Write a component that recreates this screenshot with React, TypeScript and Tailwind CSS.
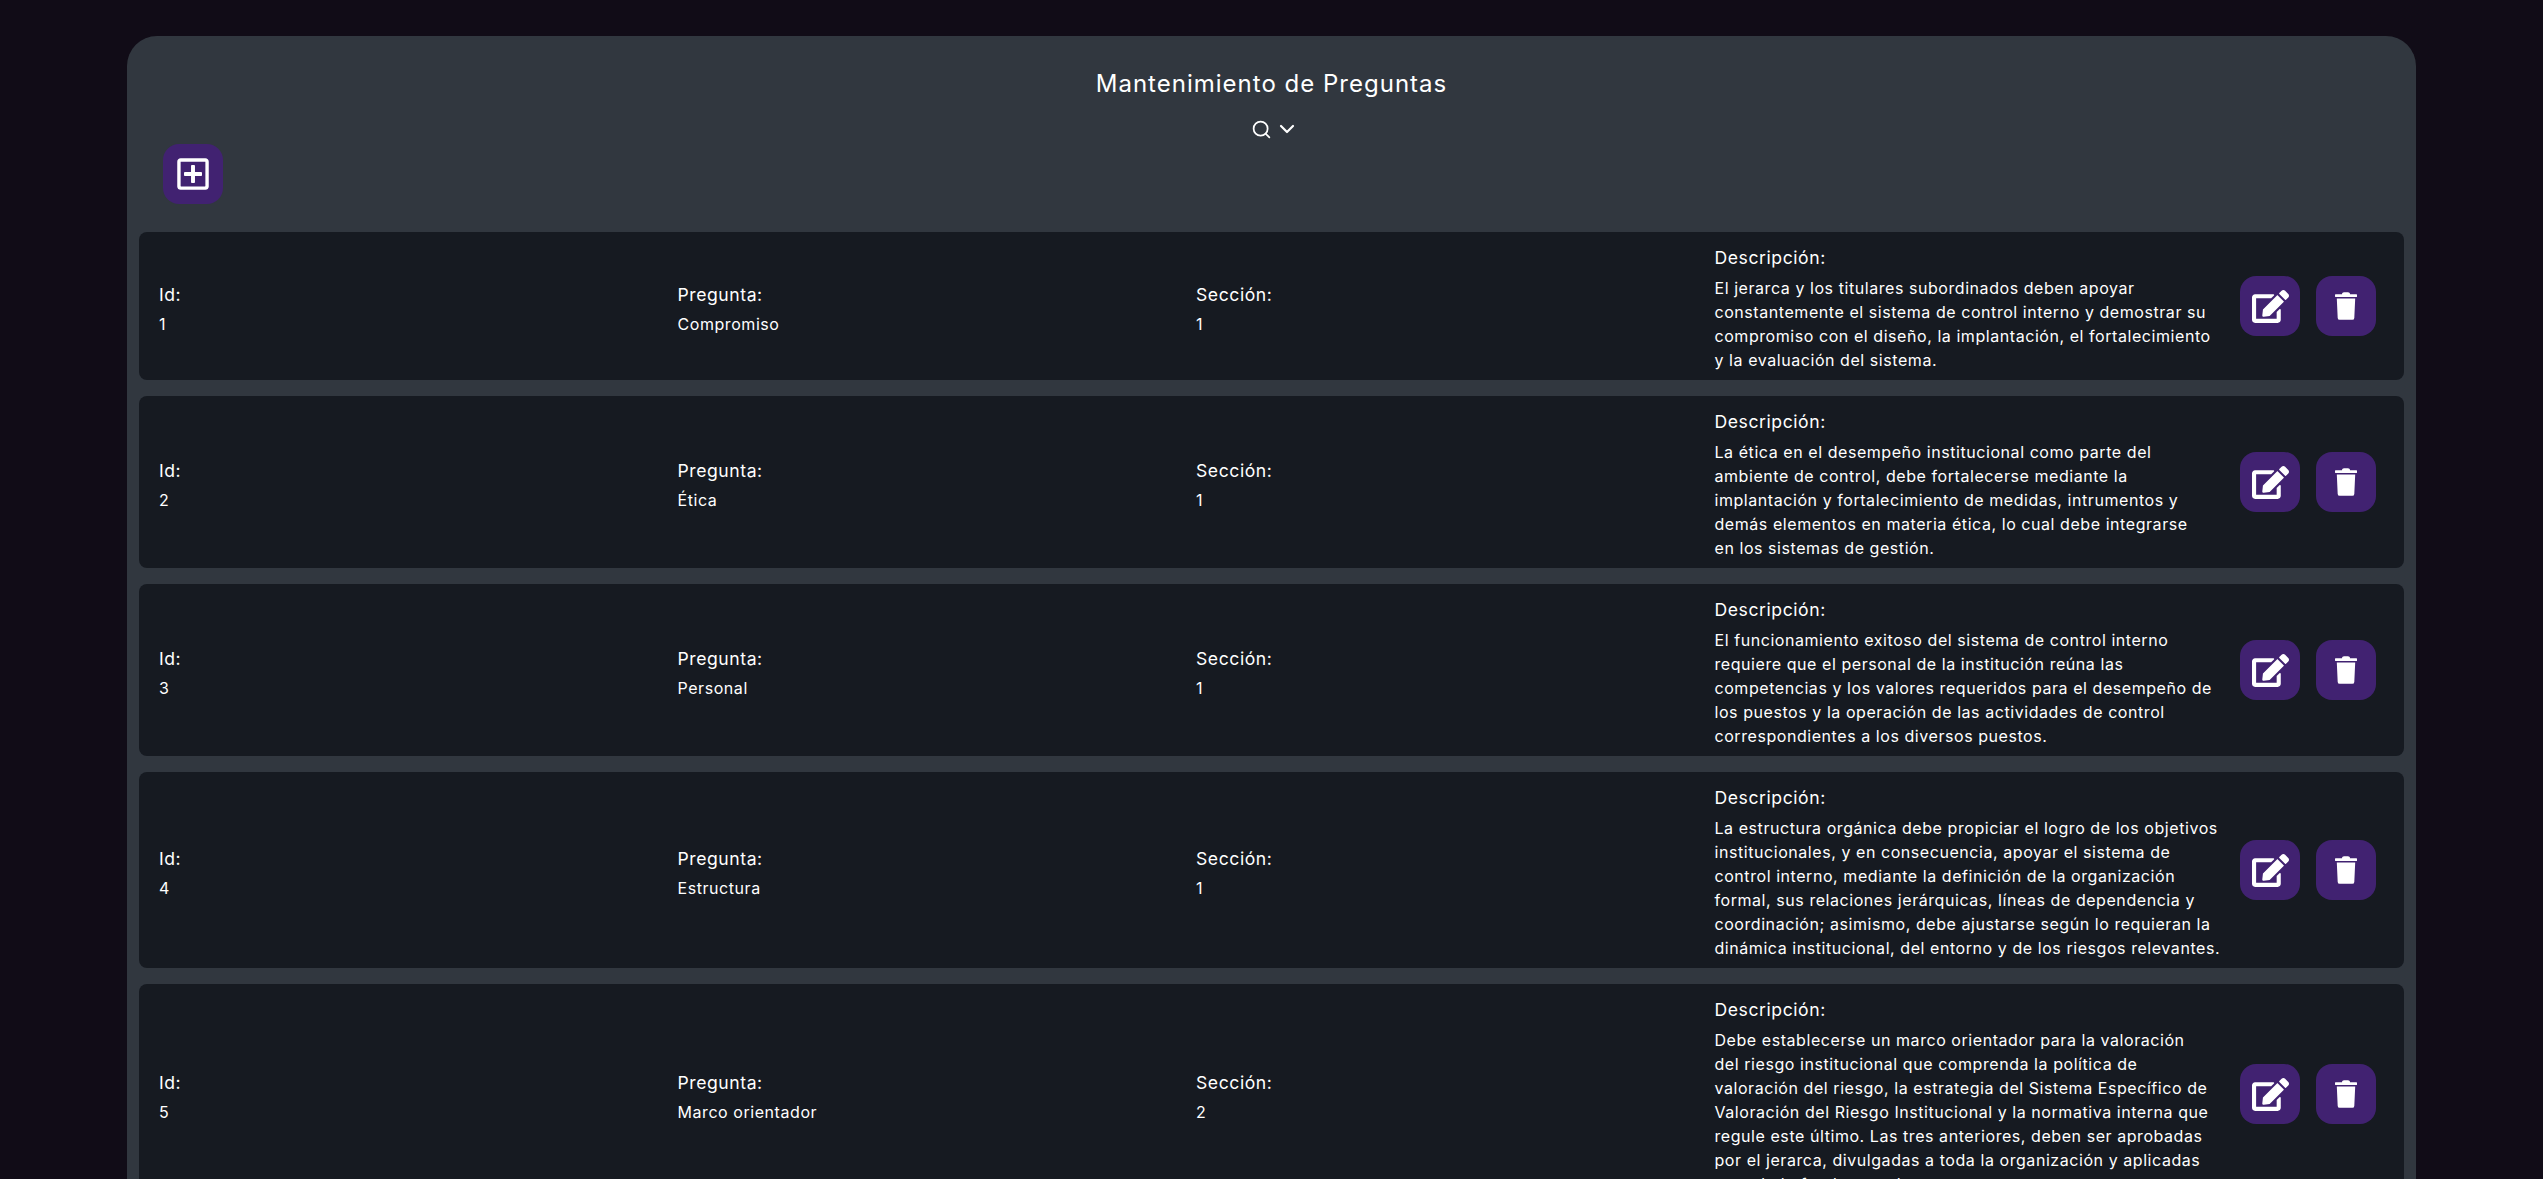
import { ChevronDown, Search } from "lucide-react";

type Q = { id: number; name: string; section: number; lines: string[] };

const rows: Q[] = [
  { id: 1, name: "Compromiso", section: 1, lines: ["El jerarca y los titulares subordinados deben apoyar", "constantemente el sistema de control interno y demostrar su", "compromiso con el diseño, la implantación, el fortalecimiento", "y la evaluación del sistema."] },
  { id: 2, name: "Ética", section: 1, lines: ["La ética en el desempeño institucional como parte del", "ambiente de control, debe fortalecerse mediante la", "implantación y fortalecimiento de medidas, intrumentos y", "demás elementos en materia ética, lo cual debe integrarse", "en los sistemas de gestión."] },
  { id: 3, name: "Personal", section: 1, lines: ["El funcionamiento exitoso del sistema de control interno", "requiere que el personal de la institución reúna las", "competencias y los valores requeridos para el desempeño de", "los puestos y la operación de las actividades de control", "correspondientes a los diversos puestos."] },
  { id: 4, name: "Estructura", section: 1, lines: ["La estructura orgánica debe propiciar el logro de los objetivos", "institucionales, y en consecuencia, apoyar el sistema de", "control interno, mediante la definición de la organización", "formal, sus relaciones jerárquicas, líneas de dependencia y", "coordinación; asimismo, debe ajustarse según lo requieran la", "dinámica institucional, del entorno y de los riesgos relevantes."] },
  { id: 5, name: "Marco orientador", section: 2, lines: ["Debe establecerse un marco orientador para la valoración", "del riesgo institucional que comprenda la política de", "valoración del riesgo, la estrategia del Sistema Específico de", "Valoración del Riesgo Institucional y la normativa interna que", "regule este último. Las tres anteriores, deben ser aprobadas", "por el jerarca, divulgadas a toda la organización y aplicadas", "en todo lo fundamental."] },
];

function IconButton({ children }: { children: React.ReactNode }) {
  return (
    <button className="flex h-[60px] w-[60px] items-center justify-center rounded-2xl bg-[#412271] text-white">
      {children}
    </button>
  );
}

function Edit() {
  return (
    <svg viewBox="0 0 576 512" className="h-[33px] w-[37px]" fill="currentColor">
      <path d="M402.6 83.2l90.2 90.2c3.8 3.8 3.8 10 0 13.8L274.4 405.6l-92.8 10.3c-12.4 1.4-22.9-9.1-21.5-21.5l10.3-92.8L388.8 83.2c3.8-3.8 10-3.8 13.8 0zm162-22.9l-48.8-48.8c-15.2-15.2-39.9-15.2-55.2 0l-35.4 35.4c-3.8 3.8-3.8 10 0 13.8l90.2 90.2c3.8 3.8 10 3.8 13.8 0l35.4-35.4c15.2-15.3 15.2-40 0-55.2zM384 346.2V448H64V128h229.8c3.2 0 6.2-1.3 8.5-3.5l40-40c7.6-7.6 2.2-20.5-8.5-20.5H48C21.5 64 0 85.5 0 112v352c0 26.5 21.5 48 48 48h352c26.5 0 48-21.5 48-48V306.2c0-10.7-12.9-16-20.5-8.5l-40 40c-2.2 2.3-3.5 5.3-3.5 8.5z" />
    </svg>
  );
}

function Trash() {
  return (
    <svg viewBox="0 0 22 28" className="h-[28px] w-[22px]" fill="currentColor">
      <path d="M7 2.2C7 1 8 .3 9 .3h4c1 0 2 .7 2 1.9h6.4c.3 0 .6.3.6.6v1.6c0 .3-.3.6-.6.6H.6C.3 5.100 0 4.800 0 4.500V2.800c0-.3.3-.6.6-.6z" />
      <path d="M1.800 6.400h18.400l-.9 19.500a2 2 0 0 1-2 1.900H4.700a2 2 0 0 1-2-1.900z" />
    </svg>
  );
}

function Plus() {
  return (
    <svg viewBox="0 0 448 512" className="h-[36px] w-[32px]" fill="currentColor">
      <path d="M352 240v32c0 6.6-5.4 12-12 12h-88v88c0 6.6-5.4 12-12 12h-32c-6.6 0-12-5.4-12-12v-88h-88c-6.6 0-12-5.4-12-12v-32c0-6.6 5.4-12 12-12h88v-88c0-6.6 5.4-12 12-12h32c6.6 0 12 5.4 12 12v88h88c6.6 0 12 5.4 12 12zm96-160v352c0 26.5-21.5 48-48 48H48c-26.5 0-48-21.5-48-48V80c0-26.5 21.5-48 48-48h352c26.5 0 48 21.5 48 48zm-48 346V86c0-3.3-2.7-6-6-6H54c-3.3 0-6 2.7-6 6v340c0 3.3 2.7 6 6 6h340c3.3 0 6-2.7 6-6z" />
    </svg>
  );
}

function Field({ label, value }: { label: string; value: string | number }) {
  return (
    <div className="flex flex-col justify-center">
      <div className="text-[17.6px] leading-[24px]">{label}</div>
      <div className="mt-[5px] text-[16px] leading-[24px]">{value}</div>
    </div>
  );
}

export default function App() {
  return (
    <div className="h-[1179px] overflow-hidden bg-[#110c17] px-[127px] pt-[36px] font-['Inter','Liberation_Sans',sans-serif] tracking-[0.035em] text-white">
      <div className="rounded-t-[30px] bg-[#31373f] px-[12px] pb-[16px]">
        <h1 className="pt-[30px] text-center text-[24px] leading-[36px] tracking-[0.042em]">Mantenimiento de Preguntas</h1>
        <div className="ml-[6px] mt-[15px] flex items-center justify-center gap-[3px]">
          <Search size={21} strokeWidth={2} />
          <ChevronDown size={24} strokeWidth={2.2} />
        </div>
        <div className="mt-[3px] pl-[24px]">
          <IconButton><Plus /></IconButton>
        </div>
        <div className="mt-[28px] flex flex-col gap-[16px]">
          {rows.map((r) => (
            <div key={r.id} className="flex items-center rounded-[8px] bg-[#161a21] pb-[8px] pl-[20px] pr-[28px] pt-[14px]">
              <div className="mr-[7px] grid flex-1 grid-cols-4">
                <Field label="Id:" value={r.id} />
                <Field label="Pregunta:" value={r.name} />
                <Field label="Sección:" value={r.section} />
                <div>
                  <div className="text-[17.6px] leading-[24px]">Descripción:</div>
                  <div className="mt-[6px] text-[16px] leading-[24px]">
                    {r.lines.map((l) => (
                      <div key={l} className="whitespace-nowrap">{l}</div>
                    ))}
                  </div>
                </div>
              </div>
              <div className="mb-[6px] flex gap-[16px]">
                <IconButton><Edit /></IconButton>
                <IconButton><Trash /></IconButton>
              </div>
            </div>
          ))}
        </div>
      </div>
    </div>
  );
}
